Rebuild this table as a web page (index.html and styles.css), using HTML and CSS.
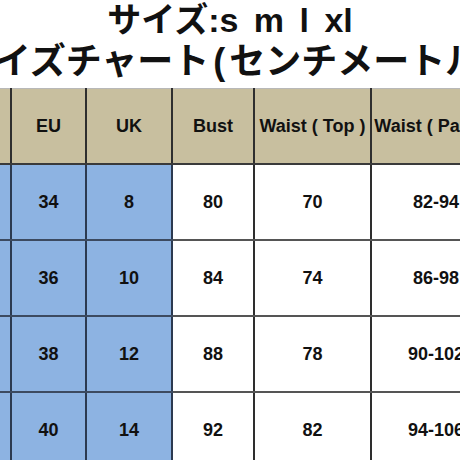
FILE: index.html
```html
<!DOCTYPE html>
<html lang="ja">
<head>
<meta charset="utf-8">
<title>サイズチャート</title>
<link rel="stylesheet" href="styles.css">
</head>
<body>
<div class="page">
  <div class="title">
    <div class="line line1"><span>サイズ:s m l xl</span></div>
    <div class="line line2"><span>サイズチャート<span class="paren">(</span>センチメートル<span class="paren">)</span></span></div>
  </div>
  <table class="chart">
    <colgroup>
      <col class="c-size">
      <col class="c-eu">
      <col class="c-uk">
      <col class="c-bust">
      <col class="c-wtop">
      <col class="c-wpants">
    </colgroup>
    <thead>
      <tr>
        <th>サイズ</th>
        <th>EU</th>
        <th>UK</th>
        <th>Bust</th>
        <th>Waist ( Top )</th>
        <th>Waist ( Pants )</th>
      </tr>
    </thead>
    <tbody>
      <tr><td class="blue">S</td><td class="blue">34</td><td class="blue">8</td><td>80</td><td>70</td><td>82-94</td></tr>
      <tr><td class="blue">M</td><td class="blue">36</td><td class="blue">10</td><td>84</td><td>74</td><td>86-98</td></tr>
      <tr><td class="blue">L</td><td class="blue">38</td><td class="blue">12</td><td>88</td><td>78</td><td>90-102</td></tr>
      <tr><td class="blue">XL</td><td class="blue">40</td><td class="blue">14</td><td>92</td><td>82</td><td>94-106</td></tr>
    </tbody>
  </table>
</div>
</body>
</html>
```

FILE: styles.css
```css
html, body {
  margin: 0;
  padding: 0;
  background: #ffffff;
}
body {
  width: 460px;
  height: 460px;
  overflow: hidden;
}
.page {
  width: 460px;
  height: 460px;
  overflow: hidden;
  font-family: "Liberation Sans", "Noto Sans CJK JP", Arial, sans-serif;
  font-weight: bold;
  color: #111111;
}
.title {
  height: 88px;
  display: flex;
  flex-direction: column;
}
.line {
  display: flex;
  justify-content: center;
  white-space: nowrap;
}
.line1 {
  height: 40px;
  line-height: 40px;
  font-size: 34px;
  word-spacing: 6px;
}
.line2 {
  height: 48px;
  line-height: 44px;
  font-size: 36px;
}
.paren {
  margin: 0 4px;
}
.chart {
  border-collapse: collapse;
  table-layout: fixed;
  margin-left: -70px;
  width: 570px;
}
.c-size { width: 80px; }
.c-eu { width: 75px; }
.c-uk { width: 86px; }
.c-bust { width: 82px; }
.c-wtop { width: 117px; }
.c-wpants { width: 130px; }
.chart th,
.chart td {
  height: 74px;
  padding: 0;
  text-align: center;
  vertical-align: middle;
  font-size: 18px;
  white-space: nowrap;
  border-left: 2px solid #2e2e2e;
  border-right: 2px solid #2e2e2e;
  border-bottom: 2px solid #555555;
}
.chart th {
  background: #c8bf9f;
  border-top: 1px solid #b8b8b8;
  border-bottom-color: #3a3a3a;
  overflow: visible;
}
.chart td.blue {
  background: #8db3e2;
  border-bottom-color: #3c4a60;
  border-left-color: #2c3a50;
  border-right-color: #2c3a50;
}
```
